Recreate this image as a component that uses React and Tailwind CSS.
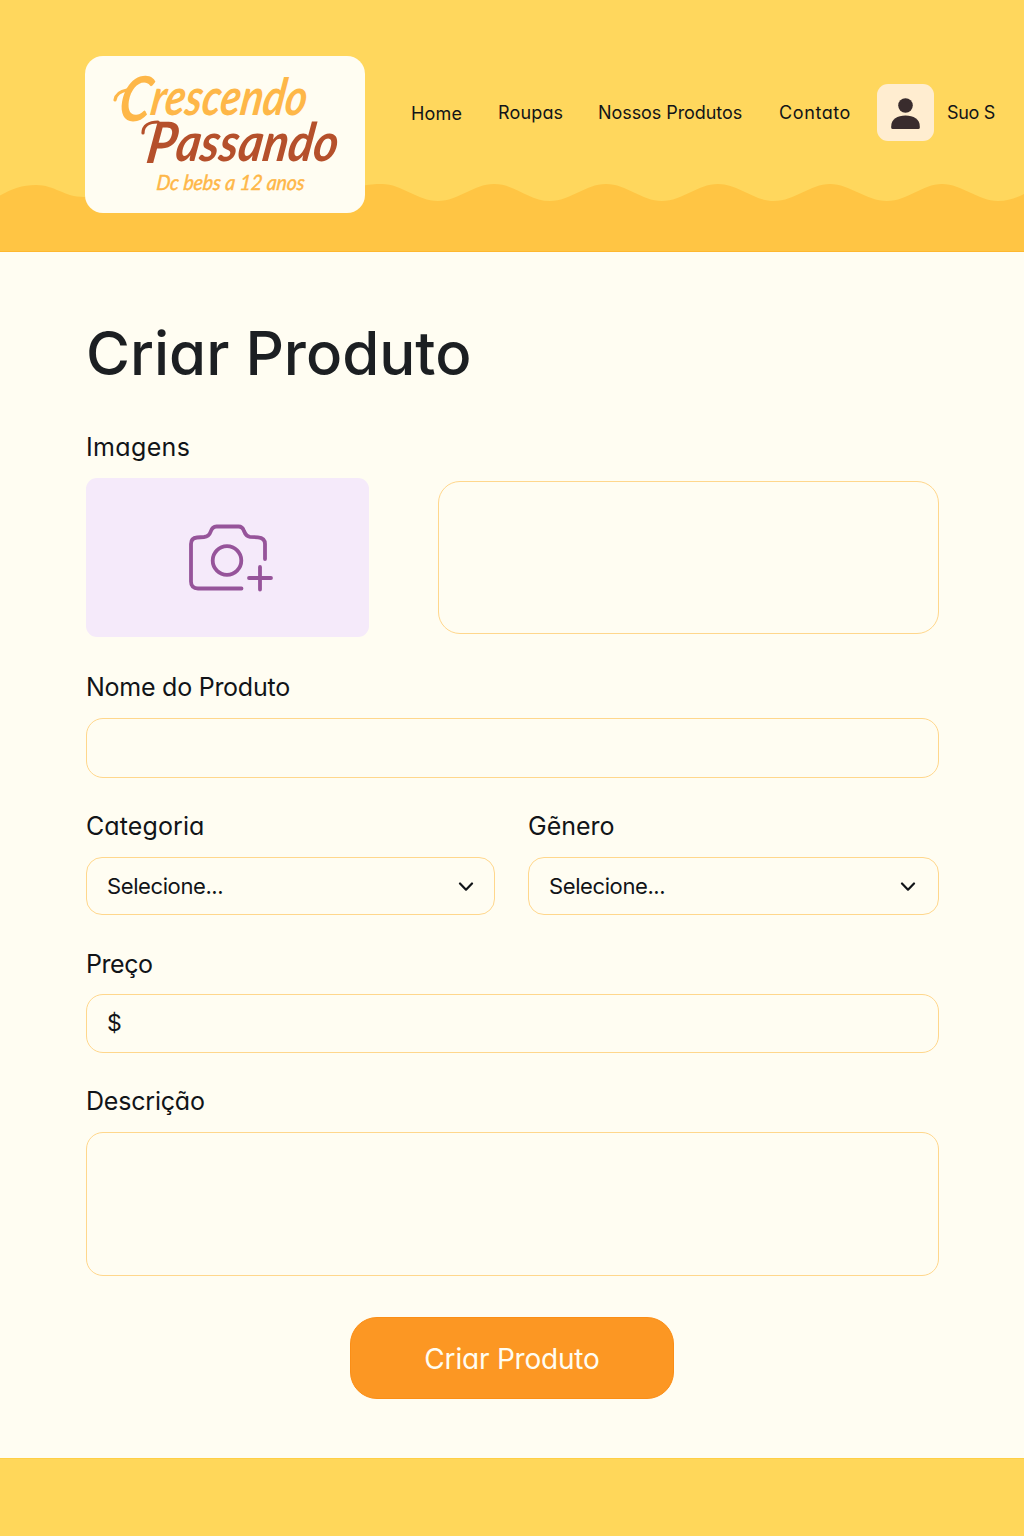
const navLinks = [
  { label: "Home", className: "w-[87px] pt-px tracking-[0.15px]" },
  { label: "Roupas", className: "w-[100px] tracking-[0.15px]" },
  { label: "Nossos Produtos", className: "w-[181px] tracking-[-0.07px]" },
  { label: "Contato", className: "w-[98px] tracking-[0.6px]" },
];

function Logo() {
  return (
    <div className="ml-[85px] mt-[56px] h-[157px] w-[280px] shrink-0 rounded-[18px] bg-[#fffdf2]">
      <svg viewBox="85 56 280 157" className="block h-full w-full" fontFamily="Lato, 'Liberation Sans', sans-serif" fontStyle="italic" fontWeight="700">
        <g fill="#feb748">
          <text transform="translate(118 115) skewX(-9)" fontSize="51" textLength="187" lengthAdjust="spacingAndGlyphs">
            <tspan fontSize="62" dy="6">C</tspan>
            <tspan dy="-6">rescendo</tspan>
          </text>
          <text transform="translate(156 190) skewX(-6)" fontSize="21" fontWeight="400" stroke="#feb748" strokeWidth="0.5" textLength="148" lengthAdjust="spacingAndGlyphs">Dc bebs a 12 anos</text>
        </g>
        <text transform="translate(145 161) skewX(-9)" fontSize="53" fill="#b5502b" textLength="191" lengthAdjust="spacingAndGlyphs">
          <tspan fontSize="57" dy="2">P</tspan>
          <tspan dy="-2">assando</tspan>
        </text>
        <g fill="none" strokeWidth="3.200" strokeLinecap="round">
          <path d="M115 100C116 94 121 91 127 90" stroke="#feb748" />
          <path d="M143 133C143 126 149 122 158 122" stroke="#b5502b" />
        </g>
      </svg>
    </div>
  );
}

function Header() {
  return (
    <header className="relative isolate flex h-[252px] overflow-hidden bg-[#ffd75d]">
      <svg viewBox="0 0 1024 72" className="absolute bottom-0 left-0 -z-10 h-[72px] w-full" aria-hidden="true">
        <path
          fill="#ffc544"
          d="M0 15.500C12 9 22 5 36 5C55 5 64 17 84 17L362 6C368 4.500 375 4 382 4C402 4 417 21 438 21S473 4 494 4S529 21 550 21S585 4 606 4S641 21 662 21S697 4 718 4S753 21 774 21S810 4 830 4S866 21 887 21S922 4 942 4S978 21 998 21C1008 21 1016 18 1024 14V72H0Z"
        />
        <path d="M0 71.500H1024" stroke="#ffb82f" />
      </svg>
      <Logo />
      <nav className="ml-[46px] mt-[101px] flex h-6 text-[18px] leading-6">
        {navLinks.map((link) => (
          <a key={link.label} href="#" className={`block shrink-0 whitespace-nowrap ${link.className}`}>
            {link.label}
          </a>
        ))}
      </nav>
      <a href="#" className="mt-[84px] flex h-[57px] items-center text-[18px]">
        <span className="flex size-[57px] items-center justify-center rounded-[11px] bg-[#ffedd0]">
          <svg viewBox="0 0 30 32" className="mt-[2px] h-8 w-[30px]" fill="#392c2d" aria-hidden="true">
            <circle cx="14.500" cy="7.500" r="7.300" />
            <path d="M.2 28.500C.2 21 6.500 17.500 14.500 17.500S28.800 21 28.800 28.500V29.500Q28.800 31 27.300 31H1.700Q.2 31 .2 29.500Z" />
          </svg>
        </span>
        <span className="ml-[13px] whitespace-nowrap tracking-[-0.35px]">Suo S</span>
      </a>
    </header>
  );
}

function Label({ children, className = "" }) {
  return <div className={`h-9 whitespace-nowrap text-[25px] leading-9 ${className}`}>{children}</div>;
}

function SelectBox({ className = "" }) {
  return (
    <button type="button" className={`flex items-center justify-between rounded-[16px] border border-[#ffd78c] pl-[20px] text-[22px] ${className}`}>
      <span className="tracking-[-0.4px]">Selecione...</span>
      <svg viewBox="0 0 16 10" className="mt-[2px] h-[10px] w-4" fill="none" stroke="#111418" strokeWidth="2.200" strokeLinecap="round" strokeLinejoin="round" aria-hidden="true">
        <path d="M2 1.500L8 7.700L14 1.500" />
      </svg>
    </button>
  );
}

function CameraPlus() {
  return (
    <svg viewBox="0 0 86 68" className="ml-[6px] h-[68px] w-[86px]" fill="none" stroke="#96549a" strokeWidth="3.800" strokeLinecap="round" strokeLinejoin="round" aria-hidden="true">
      <path d="M53.500 64.500H10Q3 64.500 3 57.500V20Q3 14 9 13.500L16 13Q21 12.500 22.500 8Q24.300 2.500 28.500 2.500H50.500Q54.500 2.500 56 7Q58 12.300 62 12.800L70 13.300Q77 13.800 77 20V35" />
      <circle cx="39" cy="36.500" r="14.300" />
      <path d="M72 43V65.500M61 54H83" />
    </svg>
  );
}

export default function App() {
  return (
    <div className="flex h-[1536px] w-[1024px] flex-col overflow-hidden bg-[#fffdf2] font-['Inter','Liberation_Sans',sans-serif] text-[#111418] [font-feature-settings:'cv11']">
      <Header />
      <main className="h-[1206px] pl-[86px] pr-[85px] pt-[71px]">
        <h1 className="h-[61px] whitespace-nowrap text-[60px] font-medium leading-[61px] text-[#1c1f22]">Criar Produto</h1>

        <Label className="mt-[45px] tracking-[0.35px]">Imagens</Label>
        <div className="mt-[13px] flex h-[159px] justify-between">
          <button type="button" className="flex w-[283px] items-center justify-center rounded-[11px] bg-[#f5eafa]">
            <CameraPlus />
          </button>
          <div className="mt-[3px] h-[153px] w-[501px] rounded-[22px] border border-[#ffd78c]" />
        </div>

        <Label className="mt-[32px] tracking-[-0.25px]">Nome do Produto</Label>
        <div className="mt-[13px] h-[60px] rounded-[17px] border border-[#ffd78c]" />

        <div className="mt-[30px] flex justify-between">
          <div className="w-[409px]">
            <Label className="tracking-[0.1px]">Categoria</Label>
            <SelectBox className="mt-[13px] h-[58px] w-full pr-[20px]" />
          </div>
          <div className="w-[411px]">
            <Label>Gẽnero</Label>
            <SelectBox className="mt-[13px] h-[58px] w-full pr-[22px]" />
          </div>
        </div>

        <Label className="mt-[31px] tracking-[-0.45px]">Preço</Label>
        <div className="mt-[12px] flex h-[59px] items-center rounded-[17px] border border-[#ffd78c] pl-[20px] text-[23px]">$</div>

        <Label className="mt-[30px] tracking-[-0.2px]">Descrição</Label>
        <div className="mt-[13px] h-[144px] rounded-[17px] border border-[#ffd78c]" />

        <button type="button" className="ml-[264px] mt-[41px] flex h-[82px] w-[324px] items-center justify-center rounded-[27px] border border-[#fb8e16] bg-[#fc9723] pt-px text-[28px] tracking-[-0.2px] text-[#fffdf2]">
          Criar Produto
        </button>
      </main>
      <footer className="h-[78px] border-t border-[#ffcf45] bg-[#ffd75a]" />
    </div>
  );
}
